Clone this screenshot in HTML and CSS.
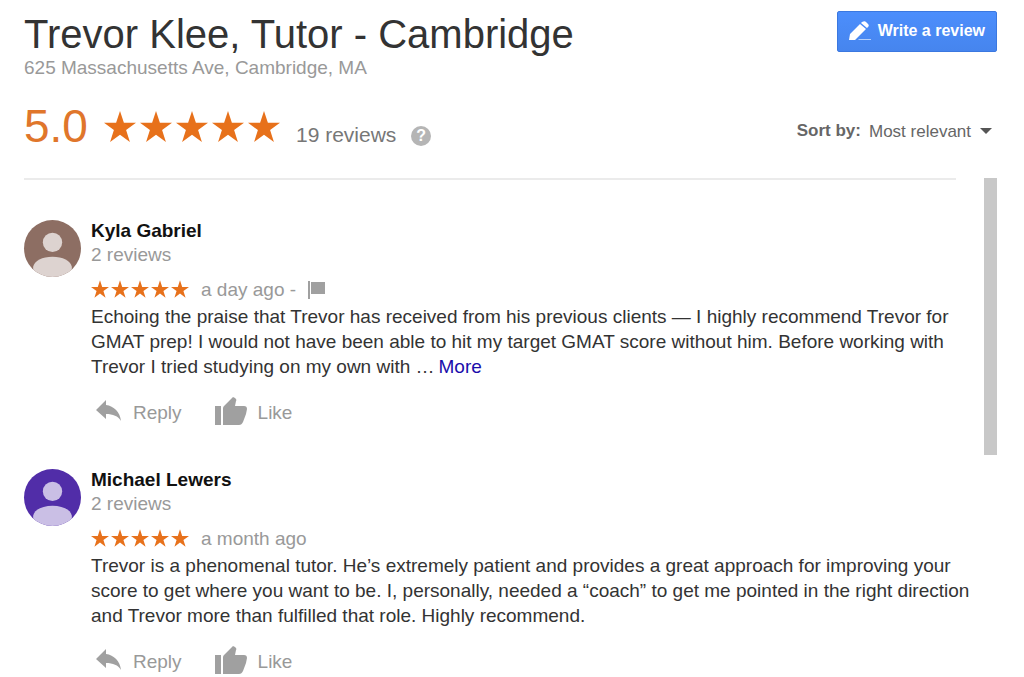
FILE: index.html
```html
<!DOCTYPE html>
<html lang="en">
<head>
    <meta charset="UTF-8">
    <meta name="viewport" content="width=device-width, initial-scale=1.0">
    <title>Trevor Klee, Tutor - Cambridge</title>
    <link rel="stylesheet" href="styles.css">
</head>
<body>
    <svg class="sprite" aria-hidden="true">
        <symbol id="star" viewBox="0 0 32 31">
            <path d="M16 0l3.9 11.8H32l-9.900 7.300L25.900 31 16 23.700 6.100 31l3.800-11.900L0 11.800h12.100z"/>
        </symbol>
        <symbol id="person" viewBox="0 0 56 56">
            <circle cx="28" cy="22" r="9.500"/>
            <path d="M9 56V46c1-6 9-10 19-10s18 4 19 10v10z"/>
        </symbol>
        <symbol id="reply" viewBox="0 0 26 21">
            <path d="M10 5V0L0 10l10 9v-5c7 0 12 2 15 7C24 12 18 6 10 5z"/>
        </symbol>
        <symbol id="like" viewBox="0 0 32 28">
            <path d="M0 9h6v19H0zM8 28V12c0-1 0-2 1-3l9-9 2 1c1 1 2 2 1 3l-1 5h9c2 0 3 1 3 3l-1 5-3 8c-1 2-2 3-4 3z"/>
        </symbol>
    </svg>
    <header class="header">
        <div>
            <h1>Trevor Klee, Tutor - Cambridge</h1>
            <p class="address">625 Massachusetts Ave, Cambridge, MA</p>
        </div>
        <button class="write-button" type="button">
            <svg class="pencil" viewBox="0 0 22 20" aria-hidden="true">
                <path d="M0 19l1-6L11 3l6 5L6 19zM12 2l1-1c2-1 3-1 4 0l2 2c1 1 1 2 0 3l-1 1z"/>
                <path d="M10 18h12v1H9z" opacity="0.6"/>
            </svg>
            Write a review
        </button>
    </header>
    <div class="summary">
        <span class="score">5.0</span>
        <span class="stars stars-large" role="img" aria-label="5 stars">
            <svg><use href="#star"/></svg>
            <svg><use href="#star"/></svg>
            <svg><use href="#star"/></svg>
            <svg><use href="#star"/></svg>
            <svg><use href="#star"/></svg>
        </span>
        <span class="total">19 reviews <button class="help" type="button">?</button></span>
        <div class="sort">
            <label for="sortSelect">Sort by:</label>
            <select id="sortSelect">
                <option>Most relevant</option>
            </select>
            <svg class="arrow" viewBox="0 0 12 6" aria-hidden="true"><path d="M0 0h12L6 6z"/></svg>
        </div>
    </div>
    <main class="content">
        <div class="reviews">
            <article class="review">
                <svg class="avatar avatar-brown" aria-hidden="true"><use href="#person"/></svg>
                <div class="review-body">
                    <h2>Kyla Gabriel</h2>
                    <p class="count">2 reviews</p>
                    <div class="meta">
                        <span class="stars" role="img" aria-label="5 stars">
                            <svg><use href="#star"/></svg>
                            <svg><use href="#star"/></svg>
                            <svg><use href="#star"/></svg>
                            <svg><use href="#star"/></svg>
                            <svg><use href="#star"/></svg>
                        </span>
                        <span>a day ago -</span>
                        <button class="flag" type="button" aria-label="Flag">
                            <svg viewBox="0 0 18 18"><path d="M0 0h2v18H0zM3 1h14v12H3z"/></svg>
                        </button>
                    </div>
                    <p class="text">Echoing the praise that Trevor has received from his previous clients — I highly recommend Trevor for GMAT prep! I would not have been able to hit my target GMAT score without him. Before working with Trevor I tried studying on my own with …<a href="#">More</a></p>
                    <div class="actions">
                        <button type="button"><svg class="reply-icon"><use href="#reply"/></svg>Reply</button>
                        <button type="button"><svg class="like-icon"><use href="#like"/></svg>Like</button>
                    </div>
                </div>
            </article>
            <article class="review">
                <svg class="avatar avatar-purple" aria-hidden="true"><use href="#person"/></svg>
                <div class="review-body">
                    <h2>Michael Lewers</h2>
                    <p class="count">2 reviews</p>
                    <div class="meta">
                        <span class="stars" role="img" aria-label="5 stars">
                            <svg><use href="#star"/></svg>
                            <svg><use href="#star"/></svg>
                            <svg><use href="#star"/></svg>
                            <svg><use href="#star"/></svg>
                            <svg><use href="#star"/></svg>
                        </span>
                        <span>a month ago</span>
                    </div>
                    <p class="text">Trevor is a phenomenal tutor. He’s extremely patient and provides a great approach for improving your score to get where you want to be. I, personally, needed a “coach” to get me pointed in the right direction and Trevor more than fulfilled that role. Highly recommend.</p>
                    <div class="actions">
                        <button type="button"><svg class="reply-icon"><use href="#reply"/></svg>Reply</button>
                        <button type="button"><svg class="like-icon"><use href="#like"/></svg>Like</button>
                    </div>
                </div>
            </article>
        </div>
        <div class="scrollbar"></div>
    </main>
</body>
</html>
```

FILE: styles.css
```css
* {
    box-sizing: border-box;
}
body {
    margin: 0;
    padding: 11px 27px 0 24px;
    background-color: #fff;
    color: #333;
    font-family: "Liberation Sans", Arial, sans-serif;
    font-size: 19px;
}
h1, h2, p {
    margin: 0;
    font-weight: normal;
}
button, select {
    border: none;
    padding: 0;
    background: none;
    font-family: inherit;
    cursor: pointer;
}
.sprite {
    display: none;
}
.header {
    display: flex;
    justify-content: space-between;
    align-items: flex-start;
}
h1 {
    font-size: 40px;
    line-height: 46px;
}
.address {
    color: #999;
    font-size: 19px;
    line-height: 22px;
}
.write-button {
    display: flex;
    align-items: center;
    gap: 7px;
    height: 41px;
    padding: 0 11px 2px;
    border: 1px solid #3b78e0;
    border-radius: 2px;
    background: linear-gradient(#4c8efc, #4685ee);
    color: #fff;
    font-size: 16px;
    font-weight: bold;
}
.pencil {
    width: 22px;
    height: 20px;
    fill: #fff;
}
.summary {
    display: flex;
    align-items: baseline;
    margin-top: 20px;
    height: 79px;
}
.score {
    color: #e0762b;
    font-size: 46px;
    line-height: 54px;
}
.stars {
    display: flex;
    gap: 2px;
    fill: #e7711b;
}
.stars svg {
    width: 18px;
    height: 18px;
}
.stars-large {
    gap: 4px;
    margin: 0 16px;
}
.stars-large svg {
    width: 32px;
    height: 31px;
}
.total {
    color: #777;
    font-size: 21px;
}
.help {
    width: 20px;
    height: 20px;
    margin-left: 9px;
    border-radius: 50%;
    background-color: #b5b5b5;
    color: #fff;
    font-size: 16px;
    font-weight: bold;
    line-height: 20px;
    vertical-align: text-bottom;
}
.sort {
    display: flex;
    align-items: center;
    align-self: flex-start;
    gap: 8px;
    height: 64px;
    margin-left: auto;
    padding-right: 5px;
    color: #666;
    font-size: 17px;
}
.sort label {
    font-weight: bold;
}
.sort select {
    appearance: none;
    color: #666;
    font-size: 17px;
}
.arrow {
    width: 12px;
    height: 6px;
    fill: #555;
}
.content {
    display: flex;
    justify-content: space-between;
    gap: 28px;
}
.reviews {
    flex: 1;
    border-top: 2px solid #ebebeb;
}
.scrollbar {
    width: 13px;
    height: 277px;
    background-color: #c8c8c8;
}
.review {
    display: flex;
    gap: 10px;
    padding-top: 40px;
}
.avatar {
    flex: none;
    width: 57px;
    height: 57px;
    border-radius: 50%;
}
.avatar-brown {
    background-color: #8d6e63;
    fill: #ddd3d0;
}
.avatar-purple {
    background-color: #512da8;
    fill: #cabfe5;
}
h2 {
    color: #111;
    font-size: 19px;
    font-weight: bold;
    line-height: 22px;
}
.count {
    color: #999;
    line-height: 26px;
}
.meta {
    display: flex;
    align-items: center;
    gap: 12px;
    margin-top: 8px;
    color: #999;
    line-height: 28px;
}
.meta .stars {
    padding-bottom: 2px;
}
.flag svg {
    display: block;
    width: 18px;
    height: 18px;
    fill: #a0a0a0;
}
.text {
    margin-right: -20px;
    line-height: 25px;
}
.text a {
    margin-left: 4px;
    color: #1a0dab;
    text-decoration: none;
}
.actions {
    display: flex;
    gap: 33px;
    margin-top: 17px;
    padding-left: 5px;
}
.actions button {
    display: flex;
    align-items: center;
    gap: 11px;
    height: 33px;
    color: #999;
    font-size: 19px;
}
.actions svg {
    margin-bottom: 4px;
    fill: #a0a0a0;
}
.reply-icon {
    width: 26px;
    height: 21px;
}
.like-icon {
    width: 32px;
    height: 28px;
}
```
